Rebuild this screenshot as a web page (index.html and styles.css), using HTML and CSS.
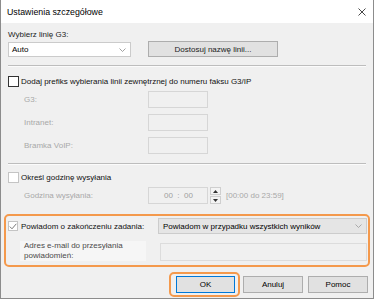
FILE: index.html
```html
<!DOCTYPE html>
<html lang="pl">
<head>
  <meta charset="UTF-8" />
  <meta name="viewport" content="width=device-width, initial-scale=1.0"/>
  <title>Ustawienia szczegółowe</title>
  <link rel="stylesheet" href="styles.css">
</head>
<body>

  <div class="window">
    <div class="titlebar">
      <span class="title">Ustawienia szczegółowe</span>
      <svg class="close" width="8" height="8" viewBox="0 0 8 8">
        <path d="M0.5 0.5 L7.5 7.5 M7.5 0.5 L0.5 7.5" stroke="#333" stroke-width="0.9" fill="none"/>
      </svg>
    </div>

    <div class="content">
      <div class="lbl-top">Wybierz linię G3:</div>
      <div class="line-row">
        <div class="select">
          <span>Auto</span>
          <svg width="7" height="4" viewBox="0 0 7 4"><polyline points="0.5,0.5 3.5,3.5 6.5,0.5" stroke="#8a8a8a" stroke-width="0.8" fill="none"/></svg>
        </div>
        <button class="btn wide">Dostosuj nazwę linii...</button>
      </div>

      <div class="sep"></div>

      <div class="check-row">
        <span class="box"></span>
        <span>Dodaj prefiks wybierania linii zewnętrznej do numeru faksu G3/IP</span>
      </div>
      <div class="field-row first">
        <span class="flabel">G3:</span>
        <span class="input"></span>
      </div>
      <div class="field-row">
        <span class="flabel">Intranet:</span>
        <span class="input"></span>
      </div>
      <div class="field-row">
        <span class="flabel">Bramka VoIP:</span>
        <span class="input"></span>
      </div>

      <div class="sep lower"></div>

      <div class="check-row second">
        <span class="box light"></span>
        <span>Określ godzinę wysyłania</span>
      </div>
      <div class="field-row time-row">
        <span class="flabel">Godzina wysyłania:</span>
        <span class="input time">00&nbsp;&nbsp;:&nbsp;&nbsp;00</span>
        <span class="spin">
          <span class="spin-half"><svg width="5" height="3" viewBox="0 0 5 3"><polygon points="0,3 2.5,0 5,3" fill="#333"/></svg></span>
          <span class="spin-half"><svg width="5" height="3" viewBox="0 0 5 3"><polygon points="0,0 2.5,3 5,0" fill="#333"/></svg></span>
        </span>
        <span class="range">[00:00 do 23:59]</span>
      </div>

      <div class="notify">
        <div class="nrow">
          <span class="box light checked">
            <svg width="8" height="7" viewBox="0 0 8 7"><polyline points="0.8,3.6 3,5.8 7.3,0.8" stroke="#7a7a7a" stroke-width="1" fill="none"/></svg>
          </span>
          <span class="nlabel">Powiadom o zakończeniu zadania:</span>
          <div class="select gray">
            <span>Powiadom w przypadku wszystkich wyników</span>
            <svg width="7" height="4" viewBox="0 0 7 4"><polyline points="0.5,0.5 3.5,3.5 6.5,0.5" stroke="#9a9a9a" stroke-width="0.8" fill="none"/></svg>
          </div>
        </div>
        <div class="nrow mail">
          <span class="mail-label">Adres e-mail do przesyłania<br>powiadomień:</span>
          <span class="input mail-input"></span>
        </div>
      </div>

      <div class="buttons">
        <span class="focus"><button class="btn ok">OK</button></span>
        <button class="btn">Anuluj</button>
        <button class="btn last">Pomoc</button>
      </div>
    </div>
  </div>

</body>
</html>
```

FILE: styles.css
```css
* { box-sizing: border-box; }
body {
  margin: 0;
  font-family: 'Liberation Sans', Arial, sans-serif;
  font-size: 8px;
  color: #1a1a1a;
  background: #fff;
}

.window {
  width: 374px;
  height: 299px;
  border: 1px solid #8c8c8c;
  border-top: none;
  background: #f0f0f0;
  display: flex;
  flex-direction: column;
}

.titlebar {
  height: 23px;
  background: #fff;
  display: flex;
  align-items: center;
  justify-content: space-between;
  padding: 0 7px 0 6px;
}

.title {
  font-size: 8.8px;
  color: #000;
}

.close { display: block; }

.content {
  flex: 1;
  padding: 0 5px 0 7px;
}

.lbl-top {
  height: 10px;
  line-height: 10px;
  margin-top: 7px;
  color: #222;
}

.line-row {
  display: flex;
  align-items: flex-end;
  height: 16px;
  margin-top: 1px;
}

.select {
  width: 123px;
  height: 15px;
  background: #fff;
  border: 1px solid #cbcbcb;
  display: flex;
  align-items: center;
  justify-content: space-between;
  padding: 0 4px 0 3px;
  color: #000;
}

.select svg { display: block; }

.btn {
  font-family: inherit;
  font-size: 8px;
  color: #000;
  background: #e1e1e1;
  border: 1px solid #adadad;
  height: 17px;
  width: 60px;
  padding: 0;
  margin: 0;
}

.btn.wide {
  width: 130px;
  height: 16px;
  margin-left: 17px;
  color: #222;
}

.sep {
  height: 2px;
  border-top: 1px solid #bdbdbd;
  border-bottom: 1px solid #fbfbfb;
  margin: 8px 2px 0 0;
}

.sep.lower { margin-top: 9px; }

.check-row {
  display: flex;
  align-items: center;
  height: 12px;
  margin-top: 8px;
  color: #111;
}

.check-row.second { margin-top: 6px; }

.box {
  width: 11px;
  height: 11px;
  border: 1px solid #333;
  background: #fff;
  margin-right: 2px;
  flex-shrink: 0;
}

.box.light {
  border-color: #c4c4c4;
}

.field-row {
  display: flex;
  align-items: center;
  height: 17px;
  padding-left: 16px;
  margin-top: 6px;
}

.field-row.first { margin-top: 4px; }
.field-row.time-row { margin-top: 4px; }

.flabel {
  width: 124px;
  color: #a8a8a8;
}

.input {
  width: 60px;
  height: 17px;
  border: 1px solid #d6d6d6;
  background: #f0f0f0;
}

.input.time {
  display: flex;
  align-items: center;
  padding-left: 15px;
  color: #a0a0a0;
}

.spin {
  width: 11px;
  height: 17px;
  margin-left: 2px;
  display: flex;
  flex-direction: column;
  gap: 1px;
}

.spin-half {
  flex: 1;
  border: 1px solid #cfcfcf;
  background: #f4f4f4;
  display: flex;
  align-items: center;
  justify-content: center;
}

.spin-half svg { display: block; }

.range {
  margin-left: 5px;
  color: #a8a8a8;
}

.notify {
  margin: 10px -2px 0 -4px;
  border: 2px solid #f4994c;
  border-radius: 5px;
  padding: 2px 1px 4px 2px;
}

.nrow {
  display: flex;
  align-items: center;
  height: 16px;
}

.box.checked {
  width: 10px;
  height: 10px;
  display: flex;
  align-items: center;
  justify-content: center;
  margin-right: 3px;
}

.box.checked svg { display: block; }

.nlabel { color: #111; }

.select.gray {
  margin-left: auto;
  width: 209px;
  height: 16px;
  background: #e5e5e5;
  border-color: #cccccc;
  padding: 0 4px 0 4px;
  color: #000;
}

.nrow.mail {
  align-items: flex-start;
  height: 20px;
  margin-top: 7px;
}

.mail-label {
  margin-left: 12px;
  width: 126px;
  height: 20px;
  padding: 0 0 0 4px;
  line-height: 10px;
  background: #f6f6f6;
  color: #4a4a4a;
}

.input.mail-input {
  margin-left: auto;
  margin-top: 2px;
  width: 207px;
  height: 18px;
  border-color: #dcdcdc;
}

.buttons {
  display: flex;
  justify-content: flex-end;
  align-items: center;
  margin-top: 5px;
}

.focus {
  display: flex;
  border: 2px solid #f4994c;
  border-radius: 5px;
  padding: 2px 3px 2px 5px;
}

.btn.ok {
  width: 59px;
  border-color: #0078d7;
}

.buttons > .btn { margin-left: 3px; }
.buttons > .btn.last { margin-left: 5px; }
```
